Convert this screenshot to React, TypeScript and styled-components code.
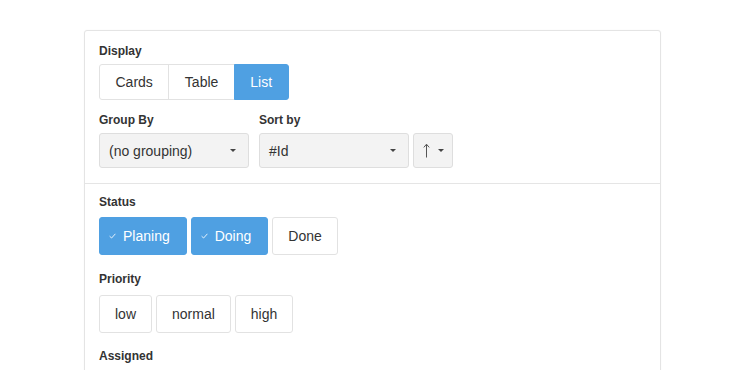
import React from "react";
import styled, { createGlobalStyle, css } from "styled-components";

const GlobalStyle = createGlobalStyle`
  html, body { margin: 0; padding: 0; background: #fff; }
  body {
    font-family: "Liberation Sans", Arial, Helvetica, sans-serif;
    color: #333;
    font-size: 14px;
  }
  * { box-sizing: border-box; }
`;

const Page = styled.div`
  padding: 30px 0 0 84px;
  height: 370px;
  overflow: hidden;
`;

const Card = styled.div`
  width: 577px;
  border: 1px solid #e4e4e4;
  border-radius: 3px;
  box-shadow: 0 0 2px rgba(0, 0, 0, 0.04);
  background: #fff;
`;

const Section = styled.div<{ $pt: number }>`
  padding: ${(p) => p.$pt}px 14px 15px;
  & + & {
    border-top: 1px solid #e5e5e5;
  }
`;

const Field = styled.div<{ $mt?: number }>`
  margin-top: ${(p) => p.$mt ?? 0}px;
`;

const Label = styled.div<{ $mb: number }>`
  font-size: 12px;
  font-weight: bold;
  line-height: 17px;
  color: #333;
  margin-bottom: ${(p) => p.$mb}px;
`;

const Group = styled.div`
  display: flex;
`;

const SegButton = styled.button<{ $active?: boolean; $pos: "first" | "mid" | "last" }>`
  height: 36px;
  padding: 0 15.5px;
  font-family: inherit;
  font-size: 14px;
  color: #333;
  background: #fff;
  border: 1px solid #e2e2e2;
  border-radius: 0;
  margin-left: -1px;
  cursor: pointer;
  ${(p) =>
    p.$pos === "first" &&
    css`
      margin-left: 0;
      border-radius: 3px 0 0 3px;
    `}
  ${(p) =>
    p.$pos === "last" &&
    css`
      border-radius: 0 3px 3px 0;
    `}
  ${(p) =>
    p.$active &&
    css`
      background: #4fa0e2;
      border-color: #4fa0e2;
      color: #fff;
      position: relative;
    `}
`;

const Row = styled.div`
  display: flex;
  gap: 10px;
  margin-top: 12px;
`;

const SortControls = styled.div`
  display: flex;
  gap: 4px;
`;

const Select = styled.div<{ $w: number }>`
  width: ${(p) => p.$w}px;
  height: 35px;
  display: flex;
  align-items: center;
  justify-content: space-between;
  padding: 0 12px 0 9px;
  background: #f3f3f3;
  border: 1px solid #dedede;
  border-radius: 3px;
  font-size: 14px;
  color: #333;
`;

const DirButton = styled.div`
  width: 40px;
  height: 35px;
  display: flex;
  align-items: center;
  justify-content: center;
  gap: 8px;
  background: #f3f3f3;
  border: 1px solid #dedede;
  border-radius: 3px;
  padding-left: 1px;
`;

const Arrow = styled.svg`
  width: 7px;
  height: 15px;
  flex: none;
`;

const Caret = styled.span`
  display: inline-block;
  width: 0;
  height: 0;
  border-top: 3px solid #444;
  border-left: 3px solid transparent;
  border-right: 3px solid transparent;
`;

const Toggles = styled.div`
  display: flex;
  gap: 4px;
`;

const Toggle = styled.button<{ $active?: boolean }>`
  height: 38px;
  display: inline-flex;
  align-items: center;
  padding: 0 15px;
  font-family: inherit;
  font-size: 14px;
  color: #333;
  background: #fff;
  border: 1px solid #e2e2e2;
  border-radius: 3px;
  cursor: pointer;
  ${(p) =>
    p.$active &&
    css`
      padding: 0 16px 0 9px;
      background: #4fa0e2;
      border-color: #4fa0e2;
      color: #fff;
    `}
`;

const Check = styled.svg`
  width: 7px;
  height: 6px;
  margin-right: 7px;
  flex: none;
`;

const AssignedBox = styled.div`
  width: 123px;
  height: 35px;
  border: 1px solid #e2e2e2;
  border-radius: 3px;
  background: #fff;
`;

const CheckIcon = () => (
  <Check viewBox="0 0 7 6">
    <path d="M0.6 3.2 L2.6 5 L6.4 0.8" fill="none" stroke="rgba(255,255,255,0.85)" strokeWidth="1" />
  </Check>
);

const UpArrow = () => (
  <Arrow viewBox="0 0 7 15">
    <path d="M3.5 1.5 V14.5 M0.8 4.4 L3.5 1.2 L6.2 4.4" fill="none" stroke="#555" strokeWidth="1" />
  </Arrow>
);

export default function App() {
  const displays = ["Cards", "Table", "List"];
  const statuses = [
    { name: "Planing", active: true },
    { name: "Doing", active: true },
    { name: "Done", active: false },
  ];
  const priorities = ["low", "normal", "high"];
  return (
    <>
      <GlobalStyle />
      <Page>
        <Card>
          <Section $pt={12}>
            <Field>
              <Label $mb={4}>Display</Label>
              <Group>
                {displays.map((d, i) => (
                  <SegButton
                    key={d}
                    $active={d === "List"}
                    $pos={i === 0 ? "first" : i === displays.length - 1 ? "last" : "mid"}
                  >
                    {d}
                  </SegButton>
                ))}
              </Group>
            </Field>
            <Row>
              <Field>
                <Label $mb={4}>Group By</Label>
                <Select $w={150}>
                  <span>(no grouping)</span>
                  <Caret />
                </Select>
              </Field>
              <Field>
                <Label $mb={4}>Sort by</Label>
                <SortControls>
                  <Select $w={150}>
                    <span>#Id</span>
                    <Caret />
                  </Select>
                  <DirButton>
                    <UpArrow />
                    <Caret />
                  </DirButton>
                </SortControls>
              </Field>
            </Row>
          </Section>
          <Section $pt={10}>
            <Field>
              <Label $mb={6}>Status</Label>
              <Toggles>
                {statuses.map((s) => (
                  <Toggle key={s.name} $active={s.active}>
                    {s.active && <CheckIcon />}
                    {s.name}
                  </Toggle>
                ))}
              </Toggles>
            </Field>
            <Field $mt={16}>
              <Label $mb={7}>Priority</Label>
              <Toggles>
                {priorities.map((p) => (
                  <Toggle key={p}>{p}</Toggle>
                ))}
              </Toggles>
            </Field>
            <Field $mt={15}>
              <Label $mb={5}>Assigned</Label>
              <AssignedBox />
            </Field>
          </Section>
        </Card>
      </Page>
    </>
  );
}
